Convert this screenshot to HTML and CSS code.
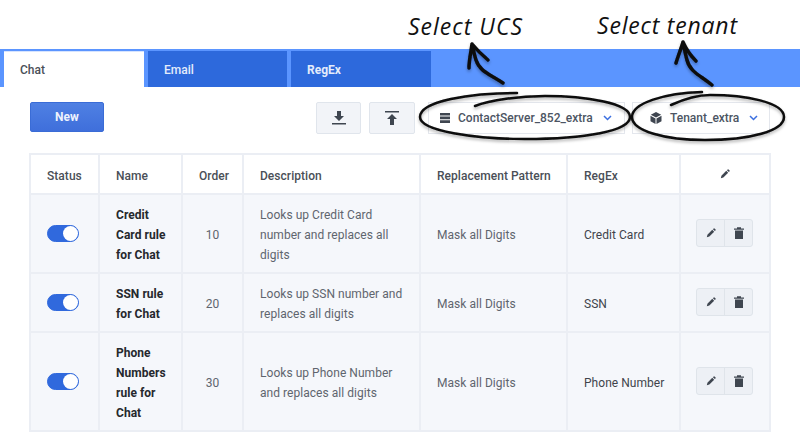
FILE: index.html
```html
<!DOCTYPE html>
<html lang="en">
<head>
<meta charset="utf-8">
<title>Rules</title>
<link rel="stylesheet" href="styles.css">
</head>
<body>
<svg width="0" height="0" class="defs">
  <defs>
    <symbol id="i-pencil" viewBox="0 0 12 12"><path d="M1 11l.7-3 5.800-5.800 2.300 2.300L4 10.300z" fill="#3f4650"/><path d="M8.300 1.400l.9-.9a.7.7 0 0 1 1 0l1.300 1.300a.7.7 0 0 1 0 1l-.9.9z" fill="#3f4650"/></symbol>
    <symbol id="i-trash" viewBox="0 0 10 12"><path d="M0 1.500h3V.3h4v1.200h3v1.300H0zM1 3.500h8V12H1z" fill="#3f4650"/></symbol>
  </defs>
</svg>
<div class="page">
  <nav class="tabs">
    <a class="tab tab-active">Chat</a>
    <a class="tab tab-mid">Email</a>
    <a class="tab tab-bold">RegEx</a>
  </nav>
  <div class="toolbar">
    <button class="btn-new">New</button>
    <div class="tools">
      <button class="btn-icon btn-down" aria-label="Download">
        <svg width="14" height="14" viewBox="0 0 14 14"><path d="M5 0h4v5h3L7 10 2 5h3z" fill="#3f4650"/><rect y="12" width="14" height="1.500" fill="#3f4650"/></svg>
      </button>
      <button class="btn-icon" aria-label="Upload">
        <svg width="14" height="14" viewBox="0 0 14 14"><rect y="0" width="14" height="1.500" fill="#3f4650"/><path d="M7 3l5 5H9v6H5V8H2z" fill="#3f4650"/></svg>
      </button>
      <div class="select select-ucs">
        <svg width="10" height="10" viewBox="0 0 10 10"><path d="M0 0h10v2.600H0zM0 3.600h10v2.600H0zM0 7.200h10V10H0z" fill="#3f4650"/></svg>
        <span>ContactServer_852_extra</span>
        <svg class="chev" width="9" height="6" viewBox="0 0 9 6"><path d="M1 1l3.500 3.500L8 1" fill="none" stroke="#3b6fe0" stroke-width="1.500"/></svg>
      </div>
      <div class="select select-tenant">
        <svg width="12" height="12" viewBox="0 0 12 12"><path d="M6 0l5.200 2.800L6 5.600.8 2.800zM.5 3.700L5.500 6.400V12L.5 9.200zM11.500 3.700L6.500 6.400V12l5-2.800z" fill="#3f4650"/></svg>
        <span>Tenant_extra</span>
        <svg class="chev" width="9" height="6" viewBox="0 0 9 6"><path d="M1 1l3.500 3.500L8 1" fill="none" stroke="#3b6fe0" stroke-width="1.500"/></svg>
      </div>
    </div>
  </div>
  <table class="rules">
    <colgroup>
      <col class="c-status"><col class="c-name"><col class="c-order"><col class="c-desc"><col class="c-pattern"><col class="c-regex"><col class="c-actions">
    </colgroup>
    <thead>
      <tr>
        <th>Status</th><th>Name</th><th>Order</th><th>Description</th><th>Replacement Pattern</th><th>RegEx</th>
        <th class="center"><svg class="ico" width="10" height="10"><use href="#i-pencil"/></svg></th>
      </tr>
    </thead>
    <tbody>
      <tr>
        <td><span class="toggle"></span></td>
        <td class="name">Credit Card rule for Chat</td>
        <td class="order">10</td>
        <td class="muted">Looks up Credit Card number and replaces all digits</td>
        <td class="muted">Mask all Digits</td>
        <td class="regex">Credit Card</td>
        <td><div class="actions"><button class="act" aria-label="Edit"><svg width="10" height="10"><use href="#i-pencil"/></svg></button><button class="act" aria-label="Delete"><svg width="10" height="12"><use href="#i-trash"/></svg></button></div></td>
      </tr>
      <tr>
        <td><span class="toggle"></span></td>
        <td class="name">SSN rule for Chat</td>
        <td class="order">20</td>
        <td class="muted">Looks up SSN number and replaces all digits</td>
        <td class="muted">Mask all Digits</td>
        <td class="regex">SSN</td>
        <td><div class="actions"><button class="act" aria-label="Edit"><svg width="10" height="10"><use href="#i-pencil"/></svg></button><button class="act" aria-label="Delete"><svg width="10" height="12"><use href="#i-trash"/></svg></button></div></td>
      </tr>
      <tr>
        <td><span class="toggle"></span></td>
        <td class="name">Phone Numbers rule for Chat</td>
        <td class="order">30</td>
        <td class="muted">Looks up Phone Number and replaces all digits</td>
        <td class="muted">Mask all Digits</td>
        <td class="regex">Phone Number</td>
        <td><div class="actions"><button class="act" aria-label="Edit"><svg width="10" height="10"><use href="#i-pencil"/></svg></button><button class="act" aria-label="Delete"><svg width="10" height="12"><use href="#i-trash"/></svg></button></div></td>
      </tr>
    </tbody>
  </table>
  <svg class="annotations" width="800" height="446" viewBox="0 0 800 446">
    <defs>
      <filter id="soft" x="-5%" y="-20%" width="110%" height="150%"><feDropShadow dx="0" dy="2" stdDeviation="1.500" flood-color="#000" flood-opacity=".3"/></filter>
    </defs>
    <text class="hand" x="408" y="35" textLength="114">Select UCS</text>
    <text class="hand" x="597" y="34" textLength="140">Select tenant</text>
    <g class="ink" filter="url(#soft)">
      <path class="thin" d="M517 93C470 93 420 101 420 117C420 131 475 139 525 139C585 139 630 131 630 117C630 103 585 96 545 96C520 96 490 100 475 106"/>
      <path class="thin" d="M702 92C665 93 632 103 632 117C632 131 665 140 705 140C750 140 784 131 784 117C784 102 745 95 710 95C695 95 682 100 671 105"/>
      <path d="M503 83C490 74 480 72 476 60C474 54 473 48 472 44M472 44C471 52 469 60 469 68M472 44C477 50 482 55 488 60"/>
      <path d="M712 85C700 75 690 72 687 60C685 53 684 47 683 42M683 42C681 49 678 56 676 63M683 42C686 49 690 55 696 61"/>
    </g>
  </svg>
</div>
</body>
</html>
```
FILE: styles.css
```css
* { box-sizing: border-box; }
html, body { margin: 0; padding: 0; background: #fff; }
body { font-family: Roboto, "Liberation Sans", sans-serif; font-size: 12px; color: #4a4f57; overflow: hidden; }
.defs { position: absolute; }
.page { position: relative; width: 800px; height: 446px; padding-top: 49px; overflow: hidden; }

.tabs { display: flex; gap: 4px; height: 38px; padding: 2px 0 0 4px; background: #5b95ff; }
.tab { width: 140px; padding: 11px 0 0 16px; font-weight: 500; color: #e4ecfb; background: #2d69dc; line-height: 16px; }
.tab-active { color: #4a4f57; background: #fff; border-top: 1px solid #d6e4ff; padding-top: 10px; }
.tab-mid { width: 139px; }
.tab-bold { font-weight: 700; }

.toolbar { display: flex; justify-content: space-between; align-items: flex-start; height: 67px; padding: 15px 30px 0; }
.btn-new { width: 74px; height: 30px; border: 1px solid #3a6cd6; border-radius: 2px; background: linear-gradient(#4f80e3, #3f6fdb); color: #eef3fd; font: 700 12px Roboto, sans-serif; padding: 0; }
.tools { display: flex; gap: 8px; align-items: stretch; height: 32px; }
.btn-icon { width: 46px; padding: 0; border: 1px solid #e0e5ec; border-radius: 2px; background: #f2f4f8; display: flex; align-items: center; justify-content: center; }
.btn-down { width: 45px; }
.btn-icon + .btn-icon + .select { margin-left: 5px; }
.select { display: flex; align-items: center; border: 1px solid #e4e7ed; background: #fff; font-weight: 500; color: #4c5563; }
.select-ucs { width: 197px; padding-left: 11px; gap: 8px; margin-right: -1px; }
.select-tenant { width: 138px; padding-left: 17px; gap: 8px; }
.chev { margin-left: 2px; }

.rules { width: 740px; margin-left: 29px; margin-top: -1px; border-collapse: collapse; table-layout: fixed; letter-spacing: .04px; }
.c-status { width: 69px; } .c-name { width: 83px; } .c-order { width: 61px; } .c-desc { width: 177px; }
.c-pattern { width: 147px; } .c-regex { width: 113px; } .c-actions { width: 90px; }
.rules th, .rules td { border: 2px solid #ebeef4; padding: 10px 8px 7px 16px; line-height: 20px; text-align: left; }
.rules th { height: 40px; padding-top: 11px; padding-bottom: 7px; font-weight: 500; color: #4a4f57; background: #fff; white-space: nowrap; }
.rules td { background: #f5f7fb; color: #5f656e; }
.rules th.center { text-align: center; padding: 0 0 2px; }
.rules td.name { font-weight: 700; color: #25282d; padding-right: 12px; }
.rules td.order { text-align: center; padding-left: 0; padding-right: 0; }
.rules td.regex { color: #3f444b; }
.ico { display: inline-block; vertical-align: middle; }

.toggle { display: block; position: relative; width: 32px; height: 17px; margin-top: -4px; border-radius: 9px; background: #3069dd; border: 1px solid #3069dd; }
.toggle::after { content: ""; position: absolute; right: 0; top: 0; width: 15px; height: 15px; border-radius: 50%; background: #fff; }

.actions { display: flex; width: 57px; height: 28px; margin: -5px 0 0 15px; border: 1px solid #dfe4ea; border-radius: 3px; background: #edf0f5; }
.rules td:last-child { padding-left: 0; padding-right: 0; }
.act { flex: 1; display: flex; align-items: center; justify-content: center; padding: 0; border: 0; background: transparent; }
.act + .act { border-left: 1px solid #dfe4ea; }

.annotations { position: absolute; left: 0; top: 0; pointer-events: none; }
.hand { font-family: "Open Sans", sans-serif; font-style: italic; font-size: 23px; fill: #111; }
.ink path { fill: none; stroke: #0a0a0a; stroke-width: 3.5; stroke-linecap: round; stroke-linejoin: round; }
.ink path.thin { stroke-width: 2.5; }
```
